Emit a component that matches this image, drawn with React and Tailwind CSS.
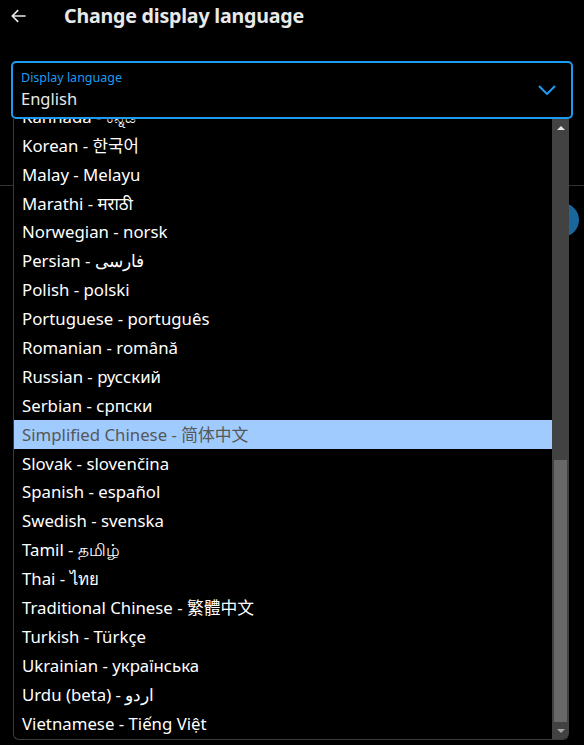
import React from "react";

const languages = [
  "Kannada - ಕನ್ನಡ",
  "Korean - 한국어",
  "Malay - Melayu",
  "Marathi - मराठी",
  "Norwegian - norsk",
  "Persian - فارسی",
  "Polish - polski",
  "Portuguese - português",
  "Romanian - română",
  "Russian - русский",
  "Serbian - српски",
  "Simplified Chinese - 简体中文",
  "Slovak - slovenčina",
  "Spanish - español",
  "Swedish - svenska",
  "Tamil - தமிழ்",
  "Thai - ไทย",
  "Traditional Chinese - 繁體中文",
  "Turkish - Türkçe",
  "Ukrainian - українська",
  "Urdu (beta) - اردو",
  "Vietnamese - Tiếng Việt",
];

const SELECTED = "Simplified Chinese - 简体中文";

function BackArrow() {
  return (
    <svg width="20" height="20" viewBox="0 0 24 24" fill="none">
      <path d="M20 12H5M11 5l-7 7 7 7" stroke="#e7e9ea" strokeWidth="2" />
    </svg>
  );
}

function Chevron() {
  return (
    <svg width="18" height="10" viewBox="0 0 18 10" fill="none">
      <path d="M1 1l8 8 8-8" stroke="#1d9bf0" strokeWidth="2" />
    </svg>
  );
}

function ScrollBar() {
  return (
    <div className="w-[17px] shrink-0 bg-[#424242] flex flex-col rounded-br-[6px]">
      <div className="h-[17px] flex items-center justify-center">
        <div className="w-0 h-0 border-l-[4px] border-r-[4px] border-b-[4px] border-l-transparent border-r-transparent border-b-[#e6e6e6]" />
      </div>
      <div className="flex-1" />
      <div className="h-[262px] mx-[2px] bg-[#686868]" />
      <div className="h-[17px] flex items-center justify-center">
        <div className="w-0 h-0 border-l-[4px] border-r-[4px] border-t-[4px] border-l-transparent border-r-transparent border-t-[#a3a3a3]" />
      </div>
    </div>
  );
}

export default function App() {
  return (
    <div
      className="relative w-[584px] h-[745px] overflow-hidden bg-black text-[#e7e9ea]"
      style={{ fontFamily: '"Noto Sans", "Noto Sans CJK SC", sans-serif' }}
    >
      {/* header */}
      <div className="h-[31px] flex items-center pl-[9px]">
        <BackArrow />
        <h1 className="ml-[35px] text-[19.6px] font-bold leading-none tracking-[-0.2px]">
          Change display language
        </h1>
      </div>

      {/* select field */}
      <div className="mt-[30px] mx-[11px] h-[58px] rounded-[5px] border-2 border-[#1d9bf0] flex items-center pl-[8px] pr-[15px]">
        <div className="flex-1 flex flex-col">
          <span className="text-[12.5px] leading-[16px] text-[#1d9bf0]">Display language</span>
          <span className="text-[16.5px] leading-[22px] mt-[2px]">English</span>
        </div>
        <Chevron />
      </div>

      {/* content under the open menu */}
      <div className="mt-[66px] border-t border-[#2f3336] flex justify-end pr-[5px] pt-[17px]">
        <div className="w-[34px] h-[34px] rounded-full bg-[#1a679c]" />
      </div>

      {/* open option list */}
      <div className="absolute left-[13px] top-[119px] w-[556px] h-[621px] flex bg-black border-l border-b border-[#3c3c3c] rounded-bl-[6px] rounded-br-[6px]">
        <div className="flex-1 overflow-hidden">
          <ul className="-mt-[17px]">
            {languages.map((lang) => (
              <li
                key={lang}
                className={
                  lang === SELECTED
                    ? "h-[28.9px] flex items-center pl-[8px] text-[16.8px] bg-[#9fcbff] text-[#575757]"
                    : "h-[28.9px] flex items-center pl-[8px] text-[16.8px] text-white"
                }
              >
                {lang}
              </li>
            ))}
          </ul>
        </div>
        <ScrollBar />
      </div>
    </div>
  );
}
